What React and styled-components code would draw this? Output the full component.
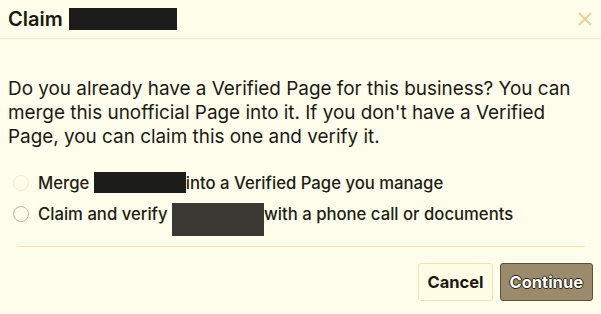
import React from 'react';
import styled, { createGlobalStyle } from 'styled-components';

const GlobalStyle = createGlobalStyle`
  html, body {
    margin: 0;
    padding: 0;
    background: #fffeec;
  }
  body {
    font-family: Inter, "Liberation Sans", Arial, sans-serif;
    color: #1b1812;
  }
`;

const Dialog = styled.div`
  width: 601px;
  height: 314px;
  box-sizing: border-box;
  background: #fffeec;
  display: flex;
  flex-direction: column;
`;

const Header = styled.div`
  height: 39px;
  box-sizing: border-box;
  border-bottom: 1px solid #f4ebc6;
  display: flex;
  align-items: center;
  justify-content: space-between;
  padding: 0 9px 0 8px;
  background: #fffeea;
`;

const Title = styled.div`
  font-size: 20px;
  font-weight: 600;
  display: flex;
  align-items: center;
`;

const Redact = styled.span`
  display: inline-block;
  width: ${p => p.w}px;
  height: ${p => p.h || 21}px;
  background: ${p => p.light ? '#3a3832' : '#1c1c1a'};
  vertical-align: middle;
  margin: 0 ${p => p.right || 0}px 0 ${p => p.left || 0}px;
  transform: translateY(${p => p.dy || 0}px);
`;

const CloseButton = styled.button`
  border: none;
  background: none;
  padding: 0;
  width: 14px;
  height: 14px;
  display: flex;
  color: #f2cd9e;
  cursor: pointer;
`;

const Body = styled.div`
  padding: 38px 8px 0 8px;
`;

const Text = styled.p`
  margin: 0;
  font-size: 18.9px;
  line-height: 24px;
`;

const Options = styled.div`
  margin-top: 18px;
  display: flex;
  flex-direction: column;
`;

const Option = styled.label`
  display: flex;
  align-items: center;
  height: 31px;
  font-size: 16.7px;
  font-weight: 500;
  color: #211b10;
  white-space: nowrap;
`;

const Radio = styled.span`
  width: 16px;
  height: 16px;
  box-sizing: border-box;
  border-radius: 50%;
  border: 1px solid ${p => p.strong ? '#c9b489' : '#f3e9c0'};
  margin: 0 9px 0 5px;
  flex-shrink: 0;
`;

const Divider = styled.hr`
  border: none;
  border-top: 1px solid #fbe0a8;
  margin: 17px 8px 0 9px;
`;

const Footer = styled.div`
  display: flex;
  justify-content: flex-end;
  gap: 7px;
  padding: 16px 8px 0 0;
`;

const Button = styled.button`
  height: 38px;
  box-sizing: border-box;
  border-radius: 3px;
  font-family: inherit;
  font-size: 16.5px;
  font-weight: 700;
  padding: 0 ${p => p.primary ? 9 : 8}px;
  cursor: pointer;
  background: ${p => p.primary ? '#9b8a6b' : '#fffde6'};
  border: 1px solid ${p => p.primary ? '#5c5039' : '#f6e3a9'};
  color: ${p => p.primary ? '#ffffff' : '#1b1812'};
  text-shadow: ${p => p.primary
    ? '-1px 0 #2c2416, 1px 0 #2c2416, 0 -1px #2c2416, 0 1px #2c2416'
    : 'none'};
`;

const CloseIcon = () => (
  <svg width="14" height="14" viewBox="0 0 14 14" fill="none" stroke="currentColor" strokeWidth="1.8">
    <path d="M1 1 L13 13 M13 1 L1 13" />
  </svg>
);

export default function App() {
  return (
    <Dialog>
      <GlobalStyle />
      <Header>
        <Title>
          Claim <Redact w={108} h={22} left={6} />
        </Title>
        <CloseButton aria-label="Close"><CloseIcon /></CloseButton>
      </Header>
      <Body>
        <Text>
          Do you already have a Verified Page for this business? You can
          merge this unofficial Page into it. If you don't have a Verified
          Page, you can claim this one and verify it.
        </Text>
        <Options>
          <Option>
            <Radio />
            Merge&nbsp;<Redact w={92} />into a Verified Page you manage
          </Option>
          <Option>
            <Radio strong />
            Claim and verify&nbsp;<Redact w={92} h={33} dy={6} light />with a phone call or documents
          </Option>
        </Options>
        <Divider />
      </Body>
      <Footer>
        <Button>Cancel</Button>
        <Button primary>Continue</Button>
      </Footer>
    </Dialog>
  );
}
